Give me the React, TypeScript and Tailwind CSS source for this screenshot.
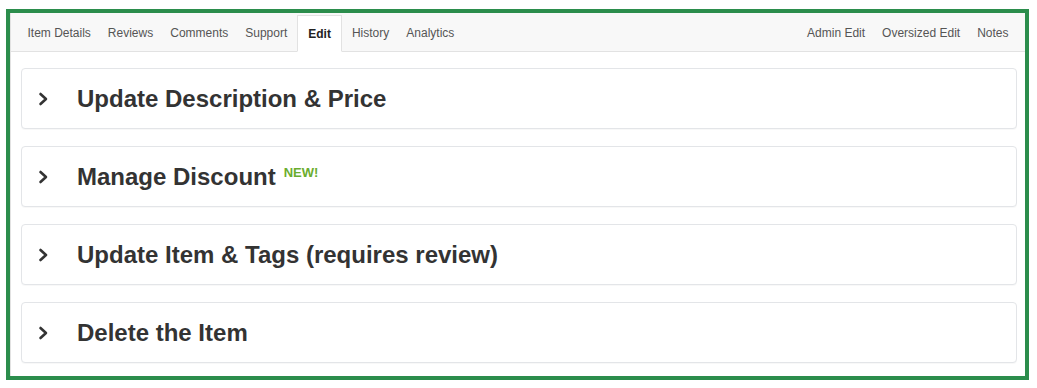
import { useState } from "react";

const leftTabs = ["Item Details", "Reviews", "Comments", "Support", "Edit", "History", "Analytics"];
const rightTabs = ["Admin Edit", "Oversized Edit", "Notes"];

const sections = [
  { title: "Update Description & Price" },
  { title: "Manage Discount", isNew: true },
  { title: "Update Item & Tags (requires review)" },
  { title: "Delete the Item" },
];

function Chevron() {
  return (
    <svg width="12" height="14" viewBox="0 0 12 14" className="shrink-0">
      <polyline points="2.5,2 8,7 2.5,12" fill="none" stroke="#333" strokeWidth="2.6" strokeLinecap="round" strokeLinejoin="round" />
    </svg>
  );
}

function Tab({ label, active, onClick }: { label: string; active: boolean; onClick: () => void }) {
  if (active) {
    return (
      <button
        onClick={onClick}
        className="relative -mb-px mx-[1.5px] h-[37px] px-[10px] bg-white border border-[#e2e2e2] border-b-white text-[12px] font-bold text-[#222]"
      >
        {label}
      </button>
    );
  }
  return (
    <button onClick={onClick} className="h-[37px] px-[8.5px] text-[12px] text-[#555]">
      {label}
    </button>
  );
}

export default function App() {
  const [tab, setTab] = useState("Edit");

  return (
    <div className="w-[1037px] h-[388px] bg-white pt-[9px] pl-[6px]" style={{ fontFamily: '"Liberation Sans", Arial, sans-serif' }}>
      <div className="w-[1023px] h-[371px] border-4 border-[#2b8d4c] bg-white flex flex-col">
        <div className="h-[39px] shrink-0 flex items-end justify-between bg-[#f8f8f8] border-l border-b border-[#e2e2e2] px-[8px]">
          <div className="flex items-end">
            {leftTabs.map((t) => (
              <Tab key={t} label={t} active={tab === t} onClick={() => setTab(t)} />
            ))}
          </div>
          <div className="flex items-end">
            {rightTabs.map((t) => (
              <Tab key={t} label={t} active={tab === t} onClick={() => setTab(t)} />
            ))}
          </div>
        </div>

        <div className="flex-1 flex flex-col gap-[17px] pt-[16px] pl-[10px] pr-[8px] border-l border-[#e2e2e2]">
          {sections.map((s) => (
            <div
              key={s.title}
              className="h-[61px] shrink-0 flex items-center border border-[#e3e5e8] rounded-[4px] bg-white shadow-[0_1px_1px_rgba(0,0,0,0.03)]"
            >
              <div className="ml-[16px] mr-[27px] flex">
                <Chevron />
              </div>
              <div className="flex items-start">
                <span className="text-[24px] font-bold text-[#333] leading-none">{s.title}</span>
                {s.isNew && (
                  <span className="ml-[8px] mt-[1px] text-[13px] font-bold text-[#6aad2e] leading-none">NEW!</span>
                )}
              </div>
            </div>
          ))}
        </div>
      </div>
    </div>
  );
}
